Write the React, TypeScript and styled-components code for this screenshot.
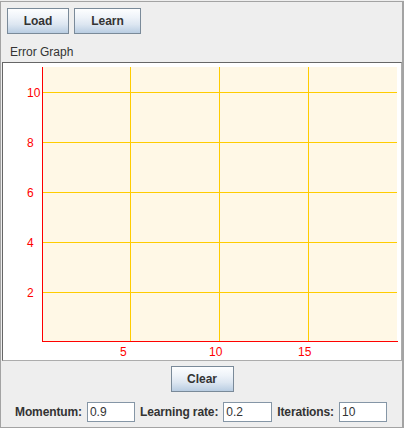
import React from "react";
import styled, { createGlobalStyle } from "styled-components";

const Global = createGlobalStyle`
  html, body { margin: 0; padding: 0; background: #eeeeee; }
  body { font-family: "Liberation Sans", Arial, sans-serif; }
  * { box-sizing: border-box; }
`;

const Frame = styled.div`
  width: 404px;
  height: 427px;
  margin-top: 1px;
  background: #eeeeee;
  border-left: 1px solid #a3a3a3;
  border-top: 1px solid #a3a3a3;
  border-bottom: 1px solid #a3a3a3;
  border-right: 2px solid #a3a3a3;
  display: flex;
  flex-direction: column;
  padding: 6px 0 4px 0;
`;

const Toolbar = styled.div`
  display: flex;
  gap: 5px;
  padding-left: 6px;
  height: 26px;
`;

const Button = styled.button<{ $w: number }>`
  width: ${(p) => p.$w}px;
  height: 26px;
  padding: 0;
  border: 1px solid #7a8a99;
  border-radius: 0;
  background: linear-gradient(
    to bottom,
    #fdfeff 0%,
    #eef3f9 35%,
    #dce6f1 65%,
    #b9cde2 100%
  );
  font-family: "Liberation Sans", Arial, sans-serif;
  font-weight: bold;
  font-size: 12px;
  color: #333333;
  display: flex;
  align-items: center;
  justify-content: center;
`;

const Caption = styled.div`
  margin-top: 11px;
  padding-left: 9px;
  height: 14px;
  line-height: 14px;
  font-size: 12px;
  color: #333333;
`;

const GraphPanel = styled.div`
  margin: 3px 0 0 1px;
  width: 400px;
  height: 299px;
  background: #ffffff;
  border-top: 1px solid #666666;
  border-left: 1px solid #666666;
  border-right: 1px solid #acacac;
  border-bottom: 1px solid #acacac;
  display: flex;
`;

const ClearRow = styled.div`
  margin-top: 5px;
  display: flex;
  justify-content: center;
  padding-left: 1px;
`;

const ParamRow = styled.div`
  margin-top: 10px;
  height: 20px;
  display: flex;
  align-items: center;
  padding-left: 14px;
`;

const ParamLabel = styled.span`
  font-size: 12px;
  font-weight: bold;
  letter-spacing: -0.12px;
  color: #333333;
  margin-right: 5px;
`;

const Field = styled.div<{ $w: number }>`
  width: ${(p) => p.$w}px;
  height: 20px;
  border: 1px solid #8596a6;
  background: #ffffff;
  font-size: 12px;
  color: #333333;
  line-height: 18px;
  padding-left: 2px;
  margin-right: 5px;
`;

const GRID = "#ffcc00";
const RED = "#ff0000";

function Chart() {
  const hLines = [
    { y: 29, label: "10" },
    { y: 79, label: "8" },
    { y: 129, label: "6" },
    { y: 179, label: "4" },
    { y: 229, label: "2" },
  ];
  const vLines = [
    { x: 127, label: "5", lx: 117 },
    { x: 216, label: "10", lx: 206 },
    { x: 305, label: "15", lx: 295 },
  ];
  return (
    <svg width="398" height="297" viewBox="0 0 398 297" shapeRendering="crispEdges">
      <rect x="40" y="4" width="354" height="274" fill="#fff8e6" />
      {hLines.map((l) => (
        <rect key={l.label} x="40" y={l.y} width="354" height="1" fill={GRID} />
      ))}
      {vLines.map((l) => (
        <rect key={l.label} x={l.x} y="4" width="1" height="274" fill={GRID} />
      ))}
      <rect x="39" y="4" width="1" height="275" fill={RED} />
      <rect x="39" y="278" width="356" height="1" fill={RED} />
      {hLines.map((l) => (
        <text
          key={"t" + l.label}
          x="24"
          y={l.y + 5}
          fill={RED}
          fontSize="12"
          fontFamily="Liberation Sans, Arial, sans-serif"
        >
          {l.label}
        </text>
      ))}
      {vLines.map((l) => (
        <text
          key={"v" + l.label}
          x={l.lx}
          y="293"
          fill={RED}
          fontSize="12"
          fontFamily="Liberation Sans, Arial, sans-serif"
        >
          {l.label}
        </text>
      ))}
    </svg>
  );
}

export default function App() {
  return (
    <>
      <Global />
      <Frame>
        <Toolbar>
          <Button $w={62}>Load</Button>
          <Button $w={67}>Learn</Button>
        </Toolbar>
        <Caption>Error Graph</Caption>
        <GraphPanel>
          <Chart />
        </GraphPanel>
        <ClearRow>
          <Button $w={63}>Clear</Button>
        </ClearRow>
        <ParamRow>
          <ParamLabel>Momentum:</ParamLabel>
          <Field $w={48}>0.9</Field>
          <ParamLabel>Learning rate:</ParamLabel>
          <Field $w={49}>0.2</Field>
          <ParamLabel>Iterations:</ParamLabel>
          <Field $w={48}>10</Field>
        </ParamRow>
      </Frame>
    </>
  );
}
